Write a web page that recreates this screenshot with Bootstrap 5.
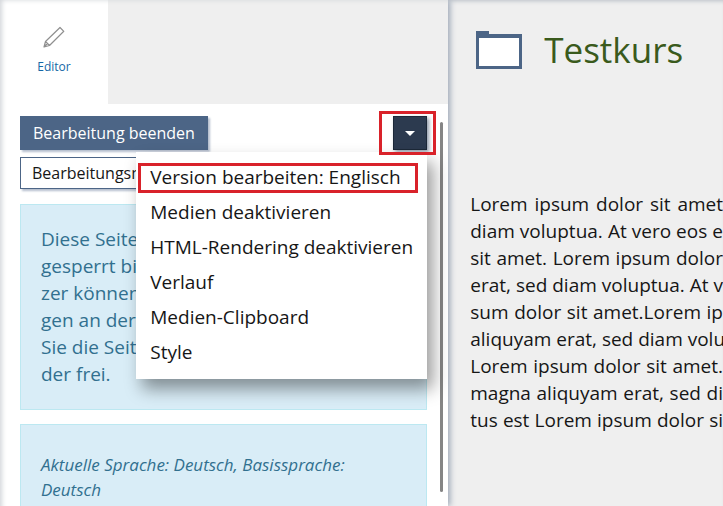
<!DOCTYPE html>
<html lang="de">
<head>
<meta charset="utf-8">
<meta name="viewport" content="width=device-width, initial-scale=1">
<title>Testkurs</title>
<link href="https://cdn.jsdelivr.net/npm/bootstrap@5.3.0/dist/css/bootstrap.min.css" rel="stylesheet">
<style>
body{font-family:"Open Sans","Noto Sans",sans-serif;font-size:19px;line-height:27px;color:#161616;background:#efefef}
.page-shell{box-shadow:inset 0 4px 4px -3px #b9bfc8}
.editor-pane{flex:0 0 62%;box-shadow:2px 0 6px #9aa5b5}
.tool-bar{height:104px;background:#efefef}
.tool-tab{width:108px;padding-top:26px;background:#fff;font-size:12px;line-height:18px;color:#1567a5}
.tool-tab svg{margin-bottom:10px}
.edge-shade{box-shadow:inset 5px 3px 5px -3px #d3d6da;pointer-events:none;inset:0}
.pane-scroll{min-height:0}
.pane-body{padding:12px 21px 0 20px}
.btn-flat{font-size:16px;line-height:22px;border-radius:0;padding:5px 12px;box-shadow:2px 2px 2px #b4becd}
.btn-done{background:#4c6586;border:1px solid #4c6586;color:#fff}
.btn-mode{background:#fff;border:1px solid #4c6586;color:#161616;margin-top:7px;padding:4px 11px}
.btn-caret{width:34px;height:34px;padding:0;background:#2c3a4f;border:1px solid #1c2838;border-radius:0;color:#fff;box-shadow:2px 2px 4px #8d98a8}
.btn-caret::after{border-top-width:5px;border-left-width:5px;border-right-width:5px;margin:0}
.frame-red{border:3px solid #d9222a;pointer-events:none}
.frame-caret{inset:-5px -9px -5px -14px;z-index:1100}
.menu-box{top:36px;right:0;left:auto;width:291px;padding:8px 0 9px;border:0;border-radius:0;background:#fff;box-shadow:6px 10px 16px rgba(0,0,0,.4)}
.menu-box .dropdown-item{font-size:19px;line-height:27px;padding:4px 14px;color:#161616}
.frame-item{inset:3px 9px 2px 2px}
.note-box{background:#d9edf7;border:1px solid #bce8f1;color:#31708f;padding:20px;border-radius:0}
.note-lines{padding:21px 20px;margin:15px 0 14px}
.note-lang{font-size:17px;line-height:25px;padding-top:27px}
.scroll-thumb{width:3px;top:18px;bottom:14px;right:5px;background:#858585;border-radius:2px}
.course-pane{padding:26px 0 0 22px}
.course-title{font-size:35px;line-height:48px;color:#3a5a1c;font-weight:400}
.course-text{margin-top:117px}
.course-text span{display:block;white-space:nowrap;text-align-last:justify}
</style>
<script src="https://cdn.jsdelivr.net/npm/bootstrap@5.3.0/dist/js/bootstrap.bundle.min.js"></script>
</head>
<body>
<div class="page-shell d-flex vh-100 overflow-hidden">
  <aside class="editor-pane d-flex flex-column bg-white position-relative">
    <div class="tool-bar d-flex flex-shrink-0">
      <a href="#" class="tool-tab d-flex flex-column align-items-center text-decoration-none">
        <svg width="22" height="22" viewBox="0 0 22 22" fill="none" stroke="#8f8f8f" stroke-width="1.2" stroke-linejoin="round"><path d="M17 1.500 20.800 5.300 6.500 19.500 1 21 2.500 15.500Z M2.500 15.500 6.500 19.500 M4.500 17.500 1.500 20.500"/></svg>
        Editor
      </a>
    </div>
    <div class="pane-scroll position-relative flex-grow-1">
      <div class="pane-body">
        <div class="d-flex justify-content-between align-items-start">
          <button type="button" class="btn btn-flat btn-done">Bearbeitung beenden</button>
          <div class="dropdown">
            <button type="button" class="btn btn-caret dropdown-toggle d-flex align-items-center justify-content-center" aria-label="Aktionen" aria-expanded="true"></button>
            <div class="frame-red frame-caret position-absolute"></div>
            <ul class="dropdown-menu show menu-box">
              <li class="position-relative"><a class="dropdown-item" href="#">Version bearbeiten: Englisch</a><div class="frame-red frame-item position-absolute"></div></li>
              <li><a class="dropdown-item" href="#">Medien deaktivieren</a></li>
              <li><a class="dropdown-item" href="#">HTML-Rendering deaktivieren</a></li>
              <li><a class="dropdown-item" href="#">Verlauf</a></li>
              <li><a class="dropdown-item" href="#">Medien-Clipboard</a></li>
              <li><a class="dropdown-item" href="#">Style</a></li>
            </ul>
          </div>
        </div>
        <button type="button" class="btn btn-flat btn-mode">Bearbeitungsm</button>
        <div class="note-box note-lines">Diese Seite<br>gesperrt bis<br>zer können<br>gen an der<br>Sie die Seite<br>der frei.</div>
        <div class="note-box note-lang"><em>Aktuelle Sprache: Deutsch, Basissprache: Deutsch</em></div>
      </div>
      <div class="scroll-thumb position-absolute"></div>
    </div>
    <div class="edge-shade position-absolute"></div>
  </aside>
  <main class="course-pane flex-grow-1 overflow-hidden">
    <div class="d-flex align-items-center">
      <svg class="flex-shrink-0 ms-1 me-3" width="50" height="40" viewBox="0 0 50 40"><path d="M2 1H15V4H48V39H2Z" fill="#4c6586"/><path d="M5 8H45V36H5Z" fill="#fff"/></svg>
      <h1 class="course-title mb-0 ms-1">Testkurs</h1>
    </div>
    <p class="course-text mb-0">
      <span>Lorem ipsum dolor sit amet</span>
      <span>diam voluptua. At vero eos e</span>
      <span>sit amet. Lorem ipsum dolor</span>
      <span>erat, sed diam voluptua. At v</span>
      <span>sum dolor sit amet.Lorem ip</span>
      <span>aliquyam erat, sed diam volu</span>
      <span>Lorem ipsum dolor sit amet.</span>
      <span>magna aliquyam erat, sed di</span>
      <span>tus est Lorem ipsum dolor si</span>
    </p>
  </main>
</div>
</body>
</html>
